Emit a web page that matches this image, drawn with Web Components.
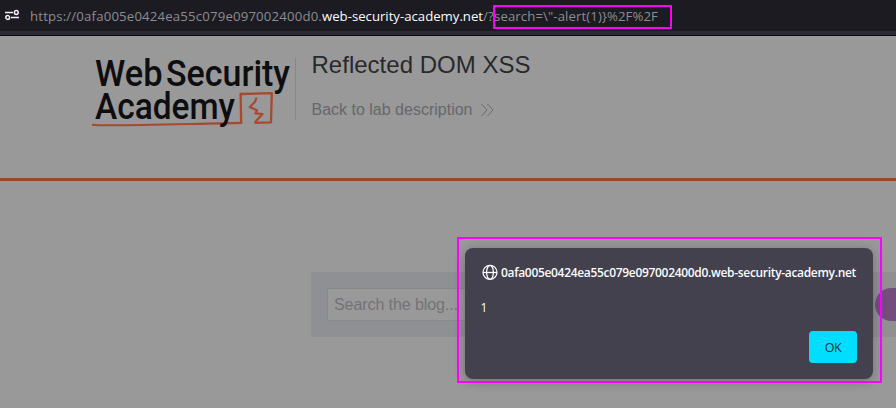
<!DOCTYPE html>
<html lang="en"><head><meta charset="utf-8"><title>Reflected DOM XSS</title>
<style>
html,body{margin:0;width:896px;height:408px;overflow:hidden;background:#99999a}
body{font-family:"Open Sans","Noto Sans",sans-serif}
</style></head><body>
<browser-window></browser-window>
<script>
const make=(name,html,ready)=>customElements.define(name,class extends HTMLElement{
  constructor(){super();this.attachShadow({mode:'open'}).innerHTML=html;}
  connectedCallback(){if(ready)ready(this);}
});
/* Text tracked so that it fills the width given in its "w" attribute. */
make('fit-text','<style>:host{display:block;white-space:pre;flex:none}span{display:inline-block}</style><span><slot></slot></span>',el=>{
  const w=parseFloat(el.getAttribute('w')),s=el.shadowRoot.querySelector('span');
  const n=el.textContent.length;
  el.style.letterSpacing=((w-s.getBoundingClientRect().width)/n)+'px';
  el.style.width=w+'px';
});
make('address-bar',`<style>
:host{display:flex;box-sizing:border-box;height:36px;background:#1c1b22;border-bottom:1px solid #08080a;box-shadow:inset 0 -4px #2b2a33;padding-left:5px;font-size:13.2px;line-height:18px;color:#8d8c92}
svg{flex:none;margin:9px 11px 0 0}
.url{display:flex;margin-top:7px}.host{color:#fbfbfe}
</style><svg width="14" height="12" viewBox="0 0 14 12" fill="none" stroke="#f0f0f4" stroke-width="1.5"><path d="M0 3.5H8M6 8.5H14"/><circle cx="11.3" cy="3.5" r="1.9"/><circle cx="2.7" cy="8.5" r="1.9"/></svg>
<div class="url"><fit-text w="292">https://0afa005e0424ea55c079e097002400d0.</fit-text><fit-text class="host" w="161">web-security-academy.net</fit-text><fit-text w="11">/?</fit-text><fit-text w="164">search=\\"-alert(1)}%2F%2F</fit-text></div>`);
make('academy-logo',`<style>:host{display:block;width:204px;height:94px;margin-top:-14px;flex:none}svg{display:block}text{font:500 37px Roboto,sans-serif;fill:#0e0e10}</style>
<svg width="204" height="94" viewBox="91 40 204 94"><g fill="none" stroke="#a8492f" stroke-linejoin="round"><path d="M92 124.8L99 125.2C130 125.8 190 123.8 242 122.9" stroke-width="2.1"/><path d="M241.2 123.5L240.6 94 271.8 93.2 271 122.3 254.5 122.8" stroke-width="2.3"/><path d="M256.5 97.5L255 101.8 249.8 107 257 110.3 255.5 113.3 262.5 114 255 122.3" stroke-width="2.2"/></g>
<text x="95" y="86.3" textLength="67.5" lengthAdjust="spacingAndGlyphs">Web</text><text x="166" y="86.3" textLength="124" lengthAdjust="spacingAndGlyphs">Security</text><text x="95" y="119" textLength="140" lengthAdjust="spacingAndGlyphs">Academy</text></svg>`);
make('lab-header',`<style>
:host{display:flex;box-sizing:border-box;height:145px;padding:18px 0 0 91px;border-bottom:3px solid #9b452d;font-family:"Liberation Sans",Arial,sans-serif}
.info{border-left:1px solid #88888a;height:62px;margin-top:4px;padding-left:15.5px}
h1{font-size:24px;line-height:28px;font-weight:400;color:#29292c;margin:-7px 0 0}
.back{display:flex;align-items:center;margin-top:21px;font-size:16px;line-height:20px;color:#67676a}
svg{margin-left:8px}
</style><academy-logo></academy-logo><div class="info"><h1><fit-text w="219">Reflected DOM XSS</fit-text></h1><div class="back"><fit-text w="161">Back to lab description</fit-text><svg width="13" height="12" fill="none" stroke="#6d6d70"><path d="M.5 0L6 6 .5 12M6.5 0L12 6 6.5 12"/></svg></div></div>`);
make('search-panel',`<style>
:host{display:flex;align-items:center;justify-content:space-between;box-sizing:border-box;margin:91px 0 0 311px;height:65px;padding-left:16px;background:#8f9093;font:16px "Liberation Sans",Arial,sans-serif}
.field{box-sizing:border-box;width:520px;height:33px;border:1px solid #89898b;background:#99999a;color:#737376;padding-left:6px;line-height:32px}
.button{width:21px;height:33px;background:#724e7f;border-radius:17px 0 0 17px}
</style><div class="field"><fit-text w="124">Search the blog...</fit-text></div><div class="button"></div>`);
make('alert-dialog',`<style>
:host{display:flex;flex-direction:column;box-sizing:border-box;width:408px;height:131px;padding:16px;border-radius:8px;background:#42414d;color:#fbfbfe;font-size:12px;line-height:16px;box-shadow:0 2px 12px rgba(20,20,26,.3)}
.origin{display:flex;gap:3px;font-weight:600}
.origin fit-text{padding-top:1px}
svg{margin-left:1px;flex:none}
.message{margin:19px 0 0 -.5px}
button{align-self:flex-end;margin-top:auto;width:48px;height:32px;border:0;border-radius:4px;padding:0;display:flex;justify-content:center;align-items:center;background:#0df;color:#2b2a33;font:12.5px "Open Sans",sans-serif}
</style><div class="origin"><svg width="16" height="16" viewBox="0 0 16 16" fill="none" stroke="#fbfbfe" stroke-width="1.3"><circle cx="8" cy="8.3" r="7"/><ellipse cx="8" cy="8.3" rx="3.4" ry="7"/><path d="M1 8.5H15"/></svg><fit-text w="355">0afa005e0424ea55c079e097002400d0.web-security-academy.net</fit-text></div><div class="message">1</div><button><fit-text w="16.5">OK</fit-text></button>`);
make('browser-window',`<style>
:host{display:block;position:relative;width:896px;height:408px;overflow:hidden}
alert-dialog{position:absolute;left:465px;top:248px}
.mark{position:absolute;box-sizing:border-box;border:2px solid #f0f}
.query{left:493px;top:5px;width:179px;height:24px}
.popup{left:457px;top:237px;width:425px;height:146px}
</style><address-bar></address-bar><lab-header></lab-header><search-panel></search-panel><alert-dialog></alert-dialog><div class="mark query"></div><div class="mark popup"></div>`);
</script></body></html>
